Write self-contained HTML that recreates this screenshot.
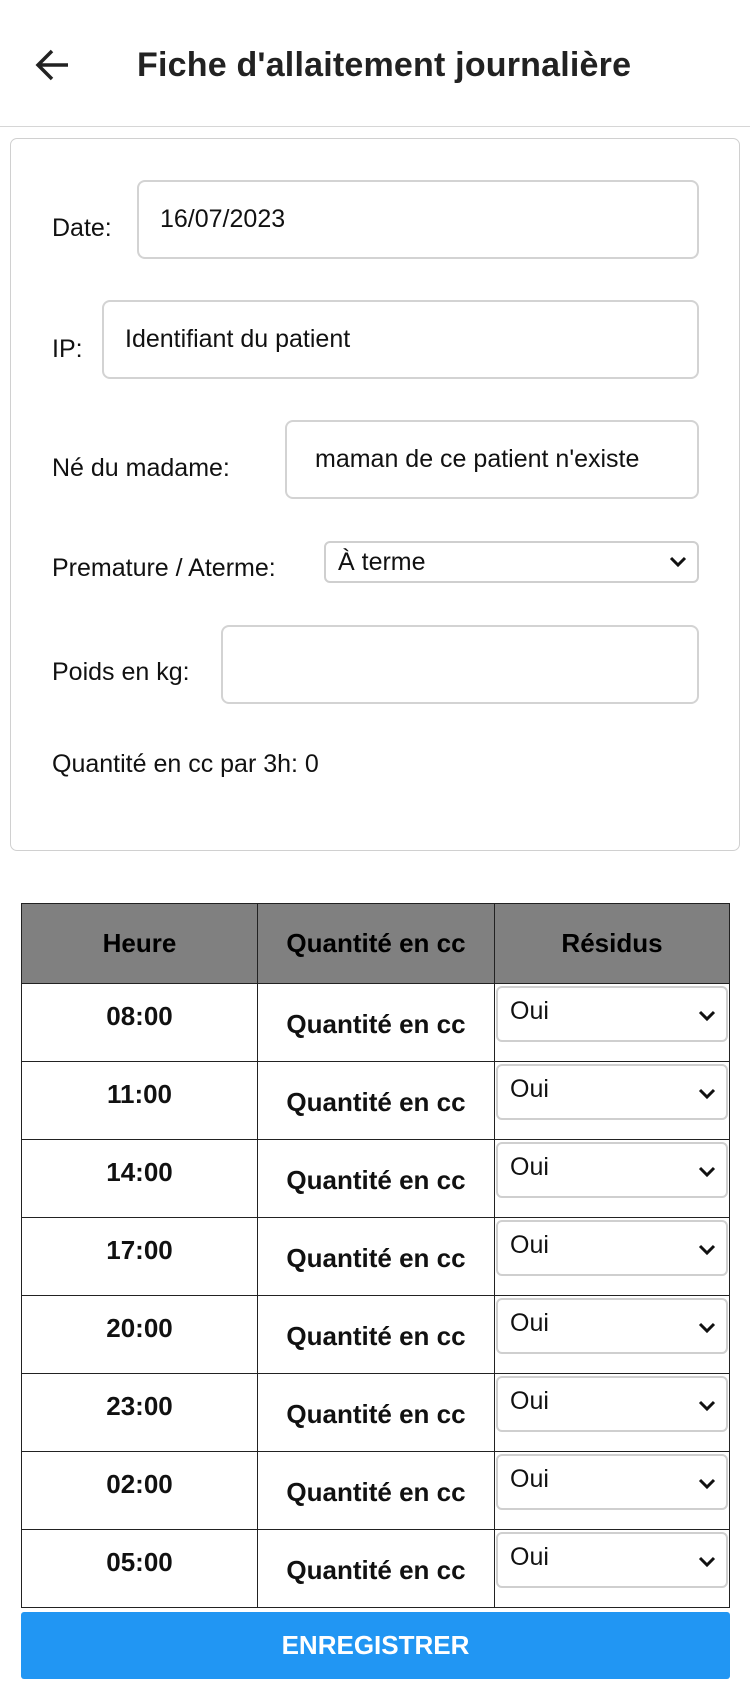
<!DOCTYPE html>
<html><head><meta charset="utf-8"><style>
*{box-sizing:border-box;margin:0;padding:0}
body{width:750px;height:1700px;background:#fff;font-family:"Liberation Sans",sans-serif;color:#111;position:relative;overflow:hidden}
.abs{position:absolute}
.hdr{left:0;top:0;width:750px;height:127px;border-bottom:1px solid #d6d6d6}
.title{left:137px;top:46px;font-size:34px;font-weight:bold;color:#222;white-space:nowrap;letter-spacing:0.2px}
.card{left:10px;top:138px;width:730px;height:713px;border:1.5px solid #d0d0d0;border-radius:7px}
.lbl{font-size:25px;color:#111;white-space:nowrap}
.inp{border:2px solid #d3d3d3;border-radius:8px;height:79px;font-size:25px;padding-left:21px;display:flex;align-items:center;white-space:nowrap;overflow:hidden}
.sel{border:2px solid #cfcfcf;border-radius:6px;font-size:25px;display:flex;align-items:center;padding-left:12px}
.chev{position:absolute;right:10px}
table{position:absolute;left:21px;top:903px;width:709px;border-collapse:collapse}
td,th{border:1.5px solid #222;text-align:center;font-size:26px;font-weight:bold}
th{background:#808080;height:80px;color:#000}
td{height:78px;position:relative;vertical-align:top}
.t{padding-top:17px}
.q{padding-top:25px}
.btn{left:21px;top:1612px;width:709px;height:67px;background:#2196f3;border-radius:3px;color:#fff;font-size:26px;font-weight:bold;display:flex;align-items:center;justify-content:center}
</style></head><body>
<div class="abs hdr"></div>
<svg class="abs" style="left:34px;top:47px" width="38" height="36" viewBox="0 0 38 36"><path d="M34 18H5M18 4L4 18l14 14" fill="none" stroke="#222" stroke-width="3.5"/></svg>
<div class="abs title">Fiche d'allaitement journalière</div>
<div class="abs card"></div>
<div class="abs lbl" style="left:52px;top:214px">Date:</div>
<div class="abs inp" style="left:137px;top:180px;width:562px">16/07/2023</div>
<div class="abs lbl" style="left:52px;top:335px">IP:</div>
<div class="abs inp" style="left:102px;top:300px;width:597px">Identifiant du patient</div>
<div class="abs lbl" style="left:52px;top:454px">Né du madame:</div>
<div class="abs inp" style="left:285px;top:420px;width:414px;padding-left:28px">maman de ce patient n'existe</div>
<div class="abs lbl" style="left:52px;top:554px">Premature / Aterme:</div>
<div class="abs sel" style="left:324px;top:541px;width:375px;height:42px">À terme<svg class="chev" width="18" height="12" viewBox="0 0 18 12"><path d="M2 2l7 7 7-7" fill="none" stroke="#111" stroke-width="3"/></svg></div>
<div class="abs lbl" style="left:52px;top:658px">Poids en kg:</div>
<div class="abs inp" style="left:221px;top:625px;width:478px"></div>
<div class="abs lbl" style="left:52px;top:750px">Quantité en cc par 3h: 0</div>
<table>
<tr><th style="width:236px">Heure</th><th style="width:237px">Quantité en cc</th><th>Résidus</th></tr>
<tr><td class="t">08:00</td><td class="q">Quantité en cc</td><td><div class="abs sel" style="left:1px;top:2px;right:1px;height:56px;font-weight:normal;align-items:flex-start;padding-top:9px">Oui<svg class="chev" style="top:22px" width="18" height="12" viewBox="0 0 18 12"><path d="M2 2l7 7 7-7" fill="none" stroke="#111" stroke-width="3"/></svg></div></td></tr>
<tr><td class="t">11:00</td><td class="q">Quantité en cc</td><td><div class="abs sel" style="left:1px;top:2px;right:1px;height:56px;font-weight:normal;align-items:flex-start;padding-top:9px">Oui<svg class="chev" style="top:22px" width="18" height="12" viewBox="0 0 18 12"><path d="M2 2l7 7 7-7" fill="none" stroke="#111" stroke-width="3"/></svg></div></td></tr>
<tr><td class="t">14:00</td><td class="q">Quantité en cc</td><td><div class="abs sel" style="left:1px;top:2px;right:1px;height:56px;font-weight:normal;align-items:flex-start;padding-top:9px">Oui<svg class="chev" style="top:22px" width="18" height="12" viewBox="0 0 18 12"><path d="M2 2l7 7 7-7" fill="none" stroke="#111" stroke-width="3"/></svg></div></td></tr>
<tr><td class="t">17:00</td><td class="q">Quantité en cc</td><td><div class="abs sel" style="left:1px;top:2px;right:1px;height:56px;font-weight:normal;align-items:flex-start;padding-top:9px">Oui<svg class="chev" style="top:22px" width="18" height="12" viewBox="0 0 18 12"><path d="M2 2l7 7 7-7" fill="none" stroke="#111" stroke-width="3"/></svg></div></td></tr>
<tr><td class="t">20:00</td><td class="q">Quantité en cc</td><td><div class="abs sel" style="left:1px;top:2px;right:1px;height:56px;font-weight:normal;align-items:flex-start;padding-top:9px">Oui<svg class="chev" style="top:22px" width="18" height="12" viewBox="0 0 18 12"><path d="M2 2l7 7 7-7" fill="none" stroke="#111" stroke-width="3"/></svg></div></td></tr>
<tr><td class="t">23:00</td><td class="q">Quantité en cc</td><td><div class="abs sel" style="left:1px;top:2px;right:1px;height:56px;font-weight:normal;align-items:flex-start;padding-top:9px">Oui<svg class="chev" style="top:22px" width="18" height="12" viewBox="0 0 18 12"><path d="M2 2l7 7 7-7" fill="none" stroke="#111" stroke-width="3"/></svg></div></td></tr>
<tr><td class="t">02:00</td><td class="q">Quantité en cc</td><td><div class="abs sel" style="left:1px;top:2px;right:1px;height:56px;font-weight:normal;align-items:flex-start;padding-top:9px">Oui<svg class="chev" style="top:22px" width="18" height="12" viewBox="0 0 18 12"><path d="M2 2l7 7 7-7" fill="none" stroke="#111" stroke-width="3"/></svg></div></td></tr>
<tr><td class="t">05:00</td><td class="q">Quantité en cc</td><td><div class="abs sel" style="left:1px;top:2px;right:1px;height:56px;font-weight:normal;align-items:flex-start;padding-top:9px">Oui<svg class="chev" style="top:22px" width="18" height="12" viewBox="0 0 18 12"><path d="M2 2l7 7 7-7" fill="none" stroke="#111" stroke-width="3"/></svg></div></td></tr>
</table>
<div class="abs btn">ENREGISTRER</div>
</body></html>
